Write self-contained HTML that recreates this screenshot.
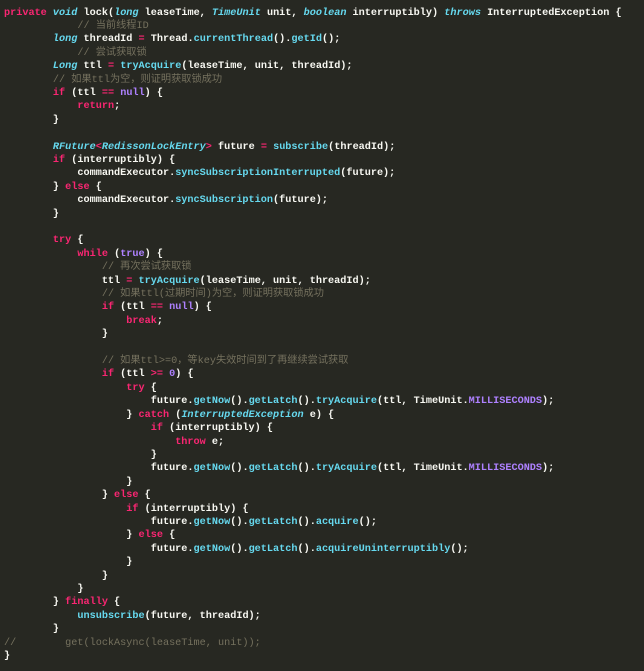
<!DOCTYPE html>
<html><head><meta charset="utf-8"><style>
html,body{margin:0;padding:0;background:#272822;width:644px;height:671px;overflow:hidden}
pre{margin:0;position:absolute;left:4px;top:6.5px;font-family:"Liberation Mono","Noto Sans CJK SC",monospace;font-size:10.2px;line-height:13.4px;color:#f8f8f2;font-weight:bold;-webkit-font-smoothing:antialiased}
.k{color:#f92672}.t{color:#66d9ef;font-style:italic}.f{color:#66d9ef}.n{color:#ae81ff}.c{color:#75715e;font-weight:normal}
</style></head><body><pre><span class="k">private</span> <span class="t">void</span> lock(<span class="t">long</span> leaseTime, <span class="t">TimeUnit</span> unit, <span class="t">boolean</span> interruptibly) <span class="t">throws</span> InterruptedException {
            <span class="c">// 当前线程ID</span>
        <span class="t">long</span> threadId <span class="k">=</span> Thread.<span class="f">currentThread</span>().<span class="f">getId</span>();
            <span class="c">// 尝试获取锁</span>
        <span class="t">Long</span> ttl <span class="k">=</span> <span class="f">tryAcquire</span>(leaseTime, unit, threadId);
        <span class="c">// 如果ttl为空，则证明获取锁成功</span>
        <span class="k">if</span> (ttl <span class="k">==</span> <span class="n">null</span>) {
            <span class="k">return</span>;
        }

        <span class="t">RFuture</span><span class="k">&lt;</span><span class="t">RedissonLockEntry</span><span class="k">&gt;</span> future <span class="k">=</span> <span class="f">subscribe</span>(threadId);
        <span class="k">if</span> (interruptibly) {
            commandExecutor.<span class="f">syncSubscriptionInterrupted</span>(future);
        } <span class="k">else</span> {
            commandExecutor.<span class="f">syncSubscription</span>(future);
        }

        <span class="k">try</span> {
            <span class="k">while</span> (<span class="n">true</span>) {
                <span class="c">// 再次尝试获取锁</span>
                ttl <span class="k">=</span> <span class="f">tryAcquire</span>(leaseTime, unit, threadId);
                <span class="c">// 如果ttl(过期时间)为空，则证明获取锁成功</span>
                <span class="k">if</span> (ttl <span class="k">==</span> <span class="n">null</span>) {
                    <span class="k">break</span>;
                }

                <span class="c">// 如果ttl&gt;=0，等key失效时间到了再继续尝试获取</span>
                <span class="k">if</span> (ttl <span class="k">&gt;=</span> <span class="n">0</span>) {
                    <span class="k">try</span> {
                        future.<span class="f">getNow</span>().<span class="f">getLatch</span>().<span class="f">tryAcquire</span>(ttl, TimeUnit.<span class="n">MILLISECONDS</span>);
                    } <span class="k">catch</span> (<span class="t">InterruptedException</span> e) {
                        <span class="k">if</span> (interruptibly) {
                            <span class="k">throw</span> e;
                        }
                        future.<span class="f">getNow</span>().<span class="f">getLatch</span>().<span class="f">tryAcquire</span>(ttl, TimeUnit.<span class="n">MILLISECONDS</span>);
                    }
                } <span class="k">else</span> {
                    <span class="k">if</span> (interruptibly) {
                        future.<span class="f">getNow</span>().<span class="f">getLatch</span>().<span class="f">acquire</span>();
                    } <span class="k">else</span> {
                        future.<span class="f">getNow</span>().<span class="f">getLatch</span>().<span class="f">acquireUninterruptibly</span>();
                    }
                }
            }
        } <span class="k">finally</span> {
            <span class="f">unsubscribe</span>(future, threadId);
        }
<span class="c">//        get(lockAsync(leaseTime, unit));</span>
}</pre></body></html>
